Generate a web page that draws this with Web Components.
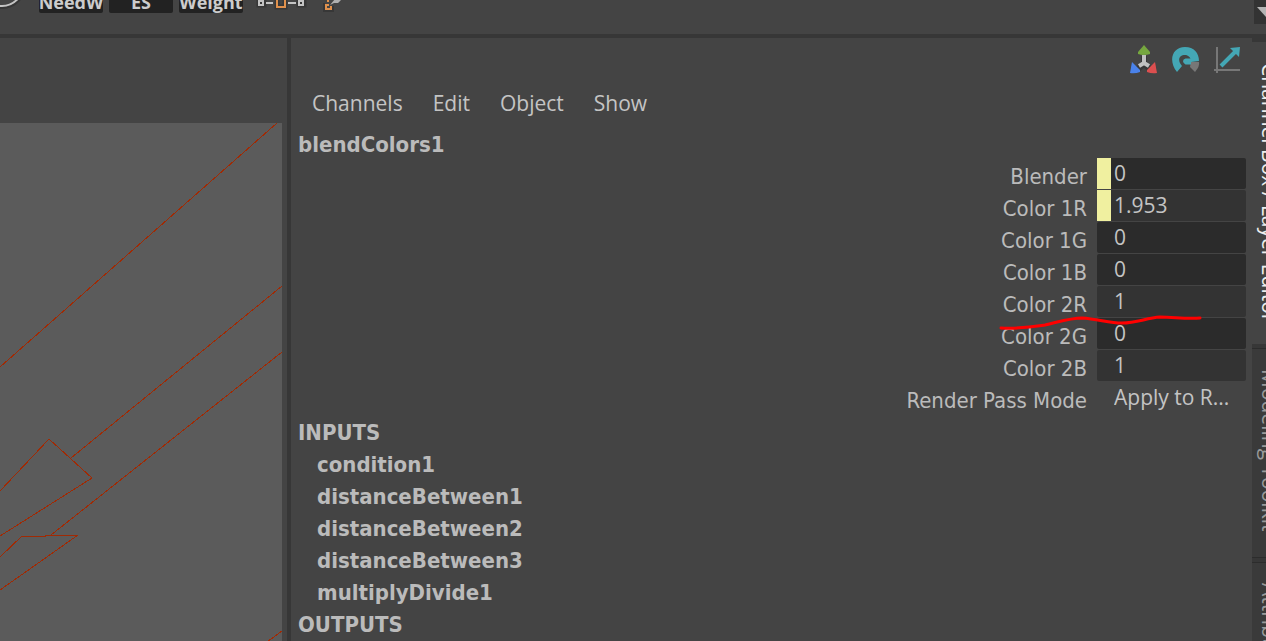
<!DOCTYPE html>
<html lang="en">
<head>
<meta charset="utf-8">
<title>Channel Box</title>
<style>
  html, body { margin: 0; height: 100%; background: #444; overflow: hidden; }
  body { font-family: "Open Sans", "Noto Sans", sans-serif; color: #c8c8c8; }
</style>
</head>
<body>
<app-shell>
  <shelf-bar slot="shelf"></shelf-bar>
  <wire-viewport slot="viewport"></wire-viewport>
  <channel-box slot="channels"></channel-box>
  <tab-rail slot="rail">
    <rail-tab active style="--size:302px">Channel Box / Layer Editor</rail-tab>
    <rail-tab style="--size:210px">Modeling Toolkit</rail-tab>
    <rail-tab style="--size:210px">Attribute Editor</rail-tab>
  </tab-rail>
</app-shell>

<script>
  const define = (name, html, setup) => customElements.define(name, class extends HTMLElement {
    connectedCallback() {
      if (this.shadowRoot) return;
      const root = this.attachShadow({ mode: "open" });
      root.innerHTML = html;
      if (setup) setup(this, root);
    }
  });

  define("app-shell", `
    <style>
      :host { display: flex; flex-direction: column; height: 100vh; overflow: hidden; background: #444; }
      .main { flex: 1; min-height: 0; display: grid; border-top: 4px solid #373737;
        grid-template-columns: minmax(0, 287fr) 4px minmax(0, 961fr) 14px; grid-template-rows: minmax(0, 1fr); }
      .split { background: #373737; }
    </style>
    <slot name="shelf"></slot>
    <div class="main">
      <slot name="viewport"></slot>
      <div class="split"></div>
      <slot name="channels"></slot>
      <slot name="rail"></slot>
    </div>`);

  define("shelf-bar", `
    <style>
      :host { display: flex; flex: none; height: 34px; overflow: hidden; align-items: flex-end; }
      svg { display: block; flex: none; height: 34px; }
      .items { display: flex; gap: 6px; padding-bottom: 21px; }
      .more { margin-left: auto; align-self: flex-start; width: 12px; height: 24px; padding: 0; border: 0; background: #333; overflow: hidden; }
      .more svg { height: 24px; }
    </style>
    <svg width="39" viewBox="0 0 39 34" fill="none">
      <circle cx="2" cy="-15" r="23" stroke="#363636" stroke-width="2"/>
      <circle cx="2" cy="-15" r="21" stroke="#c4c4c4" stroke-width="2"/>
    </svg>
    <div class="items">
      <shelf-item>NeedW</shelf-item>
      <shelf-item>ES</shelf-item>
      <shelf-item>Weight</shelf-item>
    </div>
    <svg width="110" viewBox="243 0 110 34" fill="none">
      <g stroke="#373737" stroke-width="5"><path d="M259 -1v6h5v-6M299 -1v6h5v-6M277 -1v8h8v-8"/></g>
      <path d="M259 -1v6h4v-6M299 -1v6h4v-6M266 3h7M288 3h8M259 1h4M299 1h4" stroke="#c4c4c4" stroke-width="2"/>
      <path d="M277 -1v8h8v-8" stroke="#e0914d" stroke-width="2"/>
      <path d="M324 3v8h9v-5" stroke="#373737" stroke-width="2"/>
      <path d="M328 0v2M329 5h-3v4h5v-3" stroke="#e0914d" stroke-width="2"/>
      <path d="M330 5L335 -1L342 -1L338 3L334 3Z" fill="#b0b0b0"/>
    </svg>
    <button class="more" aria-label="More shelf items"><svg width="18" viewBox="0 0 18 24"><path d="M3 7h18l-9 10z" fill="#b4b4b4"/></svg></button>`);

  define("shelf-item", `
    <style>
      :host { display: block; }
      button { display: flex; align-items: flex-end; justify-content: center; width: 64px; height: 30px; padding: 0; border: 0;
        border-radius: 2px; background: #222; color: #ccc; overflow: hidden; font: bold 18px/22px "Open Sans", sans-serif; }
    </style>
    <button><slot></slot></button>`);

  define("wire-viewport", `
    <style>
      :host { display: flex; min-width: 0; padding: 85px 5px 0 0; }
      svg { display: block; width: 100%; height: 100%; background: #5b5b5b; overflow: hidden; }
    </style>
    <svg fill="none" stroke="#a02a04" shape-rendering="crispEdges" aria-label="Wireframe view">
      <path d="M277 0L0 244M282 163L71 335M282 229L51 412M0 368L49 316L92 355L0 413M0 434L22 413H45V412H78L0 467M282 508L260 524"/>
    </svg>`);

  define("channel-box", `
    <style>
      :host { display: flex; flex-direction: column; min-width: 0; overflow: hidden; }
      .tools { display: flex; justify-content: flex-end; gap: 12px; padding: 6px 10px 0 0; }
      .tools button { width: 30px; height: 32px; padding: 0; border: 0; background: none; }
      .tools svg { display: block; }
      nav { display: flex; gap: 30px; padding: 11px 21px 9px; }
      nav button { padding: 0; border: 0; background: none; color: #c4c4c4; font: 21px/32px "Open Sans", sans-serif; }
      .rows { position: relative; margin-top: -2px; padding-bottom: 2px; }
      .mark { position: absolute; right: 48px; top: 153px; }
      node-name { padding-left: 7px; }
      node-name.child { padding-left: 26px; }
    </style>
    <div class="tools">
      <button aria-label="Manipulator"><svg width="30" height="32" viewBox="0 0 30 32">
        <path d="M16 12v8M16 20l-6 5M16 20l6 5" stroke="#363636" stroke-width="6"/>
        <path d="M16 11v8M16 19l-5 3M16 19l5 3" stroke="#c0c0c0" stroke-width="4"/>
        <path d="M16 1l6 7v2q-6 2-12 0V8z" fill="#76a73f"/>
        <path d="M4 18l8 8v2q-5 2-10 1z" fill="#4a82ea"/>
        <path d="M27 18l-8 8v2q5 2 10 1z" fill="#dc4f4f"/>
      </svg></button>
      <button aria-label="Speed"><svg width="30" height="32" viewBox="0 0 30 32" fill="none">
        <path d="M21 18h8q1 4-4 10l-5-5z" fill="#777"/>
        <path d="M7 28C-2 17 2 3 15 3c9 0 14 6 14 14l-8 1c0-5-3-7-6-7-6 0-8 5-3 11z" fill="#44a7b5"/>
        <path d="M22 16h-6q-3 1 0 3h5" stroke="#44a7b5" stroke-width="3"/>
      </svg></button>
      <button aria-label="Graph"><svg width="30" height="32" viewBox="0 0 30 32" fill="none">
        <path d="M5 3v26M2 26h26" stroke="#777" stroke-width="2"/>
        <path d="M9 22L23 8" stroke="#44a7b5" stroke-width="4"/>
        <path d="M18 4l10-1-1 10z" fill="#44a7b5"/>
      </svg></button>
    </div>
    <nav><button>Channels</button><button>Edit</button><button>Object</button><button>Show</button></nav>
    <node-name>blendColors1</node-name>
    <div class="rows">
      <channel-row label="Blender" value="0" keyed></channel-row>
      <channel-row label="Color 1R" value="1.953" keyed light></channel-row>
      <channel-row label="Color 1G" value="0"></channel-row>
      <channel-row label="Color 1B" value="0"></channel-row>
      <channel-row label="Color 2R" value="1" light></channel-row>
      <channel-row label="Color 2G" value="0"></channel-row>
      <channel-row label="Color 2B" value="1" light></channel-row>
      <channel-row label="Render Pass Mode" value="Apply to R..." choice></channel-row>
      <svg class="mark" width="210" height="24" viewBox="0 0 210 24" fill="none" stroke="#f00" stroke-width="3" stroke-linecap="round" stroke-linejoin="round">
        <path d="M7 17C26 18 38 16 51 14C68 10 77 7 88 7C104 8 115 12 128 12C143 12 152 7 166 6C180 6 191 8 206 7"/>
      </svg>
    </div>
    <node-name>INPUTS</node-name>
    <node-name class="child">condition1</node-name>
    <node-name class="child">distanceBetween1</node-name>
    <node-name class="child">distanceBetween2</node-name>
    <node-name class="child">distanceBetween3</node-name>
    <node-name class="child">multiplyDivide1</node-name>
    <node-name>OUTPUTS</node-name>`);

  define("node-name", `
    <style>
      :host { display: block; flex: none; height: 32px; color: #bbb; font: bold 22px/34px "DejaVu Sans Condensed", "DejaVu Sans", sans-serif; }
    </style>
    <slot></slot>`);

  define("channel-row", `
    <style>
      :host { display: grid; grid-template-columns: 1fr 149px; column-gap: 10px; height: 32px; padding-right: 6px; }
      label { text-align: right; padding-top: 4px; color: #bbb; font: 22px/30px "DejaVu Sans Condensed", "DejaVu Sans", sans-serif; }
      input, select { appearance: none; box-sizing: border-box; width: 100%; height: 31px; margin: 0; padding: 0 0 0 17px; border: 0;
        border-radius: 2px; background: #2b2b2b; color: #c4c4c4; outline: 0; font: 21px/31px "Open Sans", sans-serif; }
      :host([light]) input { background: #333; }
      :host([keyed]) input { padding-left: 3px; border-left: 14px solid #f0f0a0; border-radius: 0 2px 2px 0; }
      select { background: none; }
    </style>
    <label for="field"></label>`,
    (host, root) => {
      const value = host.getAttribute("value");
      root.querySelector("label").textContent = host.getAttribute("label");
      const field = document.createElement(host.hasAttribute("choice") ? "select" : "input");
      field.id = "field";
      if (field.localName === "select") field.add(new Option(value));
      else field.value = value;
      root.append(field);
    });

  define("tab-rail", `
    <style>
      :host { display: flex; flex-direction: column; overflow: hidden; background: #3a3a3a; border-top: 4px solid #373737; }
    </style>
    <slot></slot>`);

  define("rail-tab", `
    <style>
      :host { display: block; flex: none; height: var(--size); border-bottom: 4px solid #373737; }
      button { display: block; box-sizing: border-box; height: 100%; width: 36px; padding: 20px 0 0; border: 0; text-align: left;
        border-top: 1px solid #2c2c2c; border-bottom: 1px solid #2c2c2c;
        background: #3a3a3a; color: #999; writing-mode: vertical-rl; font: 21px/32px "Open Sans", sans-serif; white-space: nowrap; }
      :host([active]) button { background: #444; color: #eee; border-color: #444; }
    </style>
    <button><slot></slot></button>`);
</script>
</body>
</html>
